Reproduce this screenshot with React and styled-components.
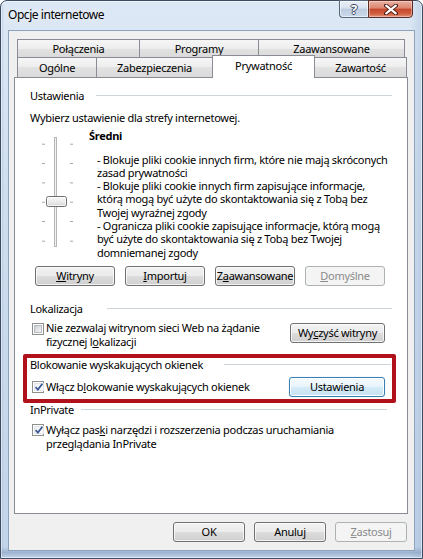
import React from 'react';
import styled, { createGlobalStyle, css } from 'styled-components';

const GlobalStyle = createGlobalStyle`
  html, body { margin: 0; padding: 0; background: #fff; }
  body {
    width: 423px;
    height: 559px;
    overflow: hidden;
    font-family: "Noto Sans", "DejaVu Sans", sans-serif;
  }
  * { box-sizing: border-box; }
`;

// aero glass frame: base tint plus a few soft streaks
const Window = styled.div`
  width: 423px;
  height: 559px;
  border: 1px solid #3b4c63;
  border-radius: 7px 7px 0 0;
  background:
    linear-gradient(180deg, transparent 0 98%, rgba(90, 120, 160, 0.35) 99%, transparent 100%),
    linear-gradient(90deg, rgba(150, 175, 205, 0.45) 0, transparent 3px, transparent 97%, rgba(150, 175, 205, 0.35) 100%),
    linear-gradient(180deg, #dde8f5 0%, #cfdeef 35%, #c2d4ea 100%);
  box-shadow: inset 0 0 0 1px rgba(255, 255, 255, 0.55);
  display: flex;
  flex-direction: column;
  font-size: 11px;
  letter-spacing: -0.28px;
  color: #000;
`;

const TitleBar = styled.div`
  height: 29px;
  flex: none;
  display: flex;
  align-items: flex-start;
  padding: 0 9px 0 7px;
`;

const Title = styled.div`
  margin-top: 6px;
  font-size: 12px;
  line-height: 16px;
  letter-spacing: -0.45px;
  text-shadow: 0 0 6px rgba(255, 255, 255, 0.9);
`;

const Caption = styled.div`
  margin: -1px 0 0 auto;
  display: flex;
  height: 18px;
`;

const HelpButton = styled.div`
  width: 29px;
  border: 1px solid #56687f;
  border-right: none;
  border-radius: 0 0 0 4px;
  background: linear-gradient(180deg, #e9eff6 0%, #d7e2ef 45%, #bccbde 50%, #cad9ea 100%);
  box-shadow: inset 0 0 0 1px rgba(255, 255, 255, 0.6);
  display: flex;
  align-items: center;
  justify-content: center;
  color: #fff;
  font-size: 13px;
  font-weight: bold;
  line-height: 1;
  letter-spacing: 0;
  text-shadow: 1px 0 #3d4a5c, -1px 0 #3d4a5c, 0 1px #3d4a5c, 0 -1px #3d4a5c;
`;

const CloseButton = styled.div`
  width: 45px;
  border: 1px solid #5b2b25;
  border-radius: 0 0 4px 0;
  background: linear-gradient(180deg, #eab0a2 0%, #dc8670 45%, #c5462b 50%, #d0603f 80%, #e2957c 100%);
  box-shadow: inset 0 0 0 1px rgba(255, 255, 255, 0.35);
  display: flex;
  align-items: center;
  justify-content: center;
`;

const Client = styled.div`
  flex: 1;
  margin: 0 7px 7px;
  border: 1px solid #8da2bd;
  background: #f0f0f0;
  padding: 8px 6px 0 5px;
  display: flex;
  flex-direction: column;
`;

const TabRow = styled.div`
  display: flex;
  margin-left: 3px;
  height: ${(p) => p.$h}px;
  ${(p) => p.$front && css`
    margin-top: -2px;
    align-items: flex-end;
    position: relative;
    z-index: 2;
  `}
`;

const Tab = styled.div`
  flex: none;
  width: ${(p) => p.$w}px;
  height: ${(p) => (p.$active ? 23 : p.$h || 20)}px;
  margin-left: ${(p) => (p.$first ? 0 : -1)}px;
  border: 1px solid #898c95;
  border-bottom: none;
  background: ${(p) => (p.$active
    ? '#fff'
    : 'linear-gradient(180deg, #f6f6f6 0%, #ededed 50%, #e2e2e2 50%, #dadada 100%)')};
  display: flex;
  align-items: center;
  justify-content: center;
  padding-bottom: ${(p) => (p.$active ? 3 : 0)}px;
  ${(p) => p.$active && css`
    margin-bottom: -1px;
    position: relative;
    z-index: 3;
  `}
`;

const Panel = styled.div`
  height: 437px;
  flex: none;
  border: 1px solid #898c95;
  background: #fff;
  padding: 0 15px;
  display: flex;
  flex-direction: column;
`;

const GroupHeader = styled.div`
  display: flex;
  align-items: center;
  line-height: 13.3px;
  margin-top: ${(p) => p.$top || 0}px;
  margin-right: ${(p) => p.$end || 0}px;
  &::after {
    content: '';
    flex: 1;
    height: 1px;
    background: #cdd5db;
  }
`;

const GroupLabel = styled.span`
  flex: none;
  width: ${(p) => p.$w}px;
  white-space: nowrap;
`;

const Text = styled.div`
  line-height: 13.3px;
  white-space: nowrap;
  margin-top: ${(p) => p.$top || 0}px;
  margin-left: ${(p) => p.$left || 0}px;
  font-weight: ${(p) => (p.$bold ? 700 : 400)};
`;

const SliderRow = styled.div`
  display: flex;
  margin-top: 4.7px;
`;

const LevelInfo = styled.div`
  display: flex;
  flex-direction: column;
`;

const ButtonRow = styled.div`
  display: flex;
  gap: 10px;
  margin-top: 7px;
  padding-left: 5px;
`;

const Button = styled.button`
  flex: none;
  width: ${(p) => p.$w}px;
  height: 20px;
  padding: 0 0 1px;
  margin-top: ${(p) => p.$top || 0}px;
  margin-left: ${(p) => (p.$push ? 'auto' : '0')};
  margin-right: ${(p) => p.$right || 0}px;
  font: inherit;
  font-size: 11px;
  letter-spacing: inherit;
  color: #000;
  border: 1px solid #707070;
  border-radius: 3px;
  background: linear-gradient(180deg, #f2f2f2 0%, #ebebeb 50%, #dddddd 50%, #cfcfcf 100%);
  box-shadow: inset 0 0 0 1px rgba(255, 255, 255, 0.75);
  display: flex;
  align-items: center;
  justify-content: center;
  ${(p) => p.$focus && css`
    border-color: #3c7fb1;
    background: linear-gradient(180deg, #f5fafd 0%, #e8f4fb 50%, #d5ebf7 50%, #c6e3f3 100%);
    box-shadow: inset 0 0 0 1px rgba(255, 255, 255, 0.9), 0 0 1px #8cc2e6;
  `}
  &:disabled {
    border-color: #adb2b5;
    background: #f4f4f4;
    color: #8a8a8a;
    box-shadow: none;
  }
`;

const Key = styled.span`
  text-decoration: underline;
  text-underline-offset: 1px;
`;

const CheckRow = styled.div`
  display: flex;
  align-items: ${(p) => (p.$center ? 'center' : 'flex-start')};
  height: ${(p) => (p.$center ? '20px' : 'auto')};
  margin-top: ${(p) => p.$top || 0}px;
`;

const Box = styled.span`
  flex: none;
  width: 12px;
  height: 12px;
  margin: ${(p) => p.$top || 0}px 2px 0 2px;
  border: 1px solid #8e8f8f;
  background: #fff;
  padding: 1px;
  display: flex;
`;

const BoxFill = styled.span`
  flex: 1;
  display: flex;
  align-items: center;
  justify-content: center;
  background: ${(p) => (p.$checked
    ? 'linear-gradient(135deg, #eef0f3, #ffffff)'
    : 'linear-gradient(135deg, #cbcfd5, #f6f6f6)')};
  border: 1px solid ${(p) => (p.$checked ? '#e2e4e8' : '#b8bcc2')};
`;

const Highlight = styled.div`
  margin: 6px -4px 0 -7px;
  padding: 0 0 2px 3px;
  border: 4px solid #b0111b;
  border-radius: 2px;
`;

const Footer = styled.div`
  display: flex;
  justify-content: flex-end;
  gap: 9px;
  margin-top: 8px;
  padding-right: 1px;
`;

const CheckBox = ({ checked, top }) => (
  <Box $top={top}>
    <BoxFill $checked={checked}>
      {checked && (
        <svg width="10" height="10" viewBox="0 0 10 10" style={{ margin: '-1px' }}>
          <path d="M1.6 5.2 L3.9 7.6 L8.4 1.8" fill="none" stroke="#3a5795" strokeWidth="1.7" />
        </svg>
      )}
    </BoxFill>
  </Box>
);

const ticks = [14.7, 34, 53.4, 72.7, 92, 111.7];

// vertical privacy-level trackbar
const Slider = () => (
  <svg width="59" height="120" viewBox="0 0 59 120" style={{ flex: 'none' }}>
    <defs>
      <linearGradient id="thumb" x1="0" y1="0" x2="0" y2="1">
        <stop offset="0" stopColor="#fafafa" />
        <stop offset="0.5" stopColor="#ececec" />
        <stop offset="1" stopColor="#d4d4d4" />
      </linearGradient>
    </defs>
    <rect x="24.5" y="8.5" width="2" height="109" fill="#f2f2f2" stroke="#b5b5b5" />
    {ticks.map((y) => (
      <g key={y} fill="#a8a8a8">
        <rect x="12" y={y} width="3" height="1" />
        <rect x="40" y={y} width="3" height="1" />
      </g>
    ))}
    <rect x="16.5" y="67.5" width="20" height="10" rx="2" fill="url(#thumb)" stroke="#6f6f6f" />
    <rect x="17.5" y="68.5" width="18" height="8" rx="1" fill="none" stroke="#fff" strokeOpacity="0.7" />
  </svg>
);

const CloseGlyph = () => (
  <svg width="14" height="11" viewBox="0 0 14 11">
    <path d="M2 1.5 L12 9.5 M12 1.5 L2 9.5" stroke="#4b1a14" strokeWidth="4" strokeLinecap="round" />
    <path d="M2.2 1.7 L11.8 9.3 M11.8 1.7 L2.2 9.3" stroke="#fff" strokeWidth="2.2" strokeLinecap="round" />
  </svg>
);

const App = () => (
  <>
    <GlobalStyle />
    <Window>
      <TitleBar>
        <Title>Opcje internetowe</Title>
        <Caption>
          <HelpButton>?</HelpButton>
          <CloseButton><CloseGlyph /></CloseButton>
        </Caption>
      </TitleBar>
      <Client>
        <TabRow $h={18}>
          <Tab $first $w={123} $h={18}>Połączenia</Tab>
          <Tab $w={120} $h={18}>Programy</Tab>
          <Tab $w={147} $h={18}>Zaawansowane</Tab>
        </TabRow>
        <TabRow $front $h={22}>
          <Tab $first $w={80}>Ogólne</Tab>
          <Tab $w={117}>Zabezpieczenia</Tab>
          <Tab $active $w={103}>Prywatność</Tab>
          <Tab $w={93}>Zawartość</Tab>
        </TabRow>
        <Panel>
          <GroupHeader $top={10.7}>
            <GroupLabel $w={66}>Ustawienia</GroupLabel>
          </GroupHeader>
          <Text $top={9.3}>Wybierz ustawienie dla strefy internetowej.</Text>
          <SliderRow>
            <Slider />
            <LevelInfo>
              <Text $bold>Średni</Text>
              <Text $top={10} $left={8}>
                - Blokuje pliki cookie innych firm, które nie mają skróconych<br />
                zasad prywatności<br />
                - Blokuje pliki cookie innych firm zapisujące informacje,<br />
                którą mogą być użyte do skontaktowania się z Tobą bez<br />
                Twojej wyraźnej zgody<br />
                - Ogranicza pliki cookie zapisujące informacje, którą mogą<br />
                być użyte do skontaktowania się z Tobą bez Twojej<br />
                domniemanej zgody
              </Text>
            </LevelInfo>
          </SliderRow>
          <ButtonRow>
            <Button $w={80}><Key>W</Key>itryny</Button>
            <Button $w={80}><Key>I</Key>mportuj</Button>
            <Button $w={80}>Z<Key>a</Key>awansowane</Button>
            <Button $w={80} disabled><Key>D</Key>omyślne</Button>
          </ButtonRow>

          <GroupHeader $top={16.3}>
            <GroupLabel $w={77}>Lokalizacja</GroupLabel>
          </GroupHeader>
          <CheckRow $top={5.7}>
            <CheckBox top={2} />
            <Text>
              Nie zezwalaj witrynom sieci Web na żądanie<br />
              fizycznej l<Key>o</Key>kalizacji
            </Text>
            <Button $w={95} $push $top={1.7} $right={7}>Wy<Key>c</Key>zyść witryny</Button>
          </CheckRow>

          <Highlight>
            <GroupHeader $end={1}>
              <GroupLabel $w={194}>Blokowanie wyskakujących okienek</GroupLabel>
            </GroupHeader>
            <CheckRow $center $top={5.8}>
              <CheckBox checked />
              <Text>Włącz b<Key>l</Key>okowanie wyskakujących okienek</Text>
              <Button $w={96} $push $right={7} $focus>Ustawienia</Button>
            </CheckRow>
          </Highlight>

          <GroupHeader $end={5}>
            <GroupLabel $w={51}>InPrivate</GroupLabel>
          </GroupHeader>
          <CheckRow $top={7}>
            <CheckBox checked top={1} />
            <Text>
              Wyłącz pas<Key>k</Key>i narzędzi i rozszerzenia podczas uruchamiania<br />
              przeglądania InPrivate
            </Text>
          </CheckRow>
        </Panel>
        <Footer>
          <Button $w={72}>OK</Button>
          <Button $w={72}>Anuluj</Button>
          <Button $w={72} disabled><Key>Z</Key>astosuj</Button>
        </Footer>
      </Client>
    </Window>
  </>
);

export default App;
